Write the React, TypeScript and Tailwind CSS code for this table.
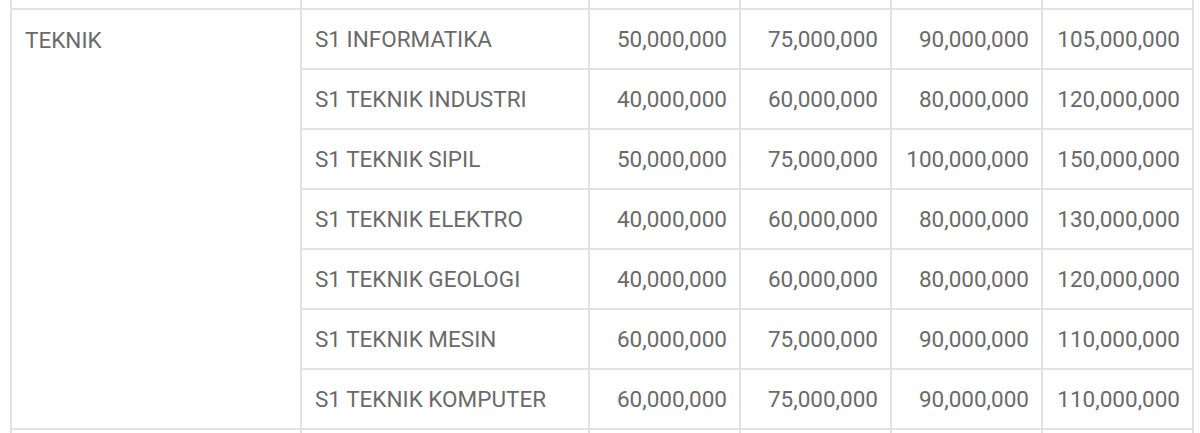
import React from 'react';

type Row = { prodi: string; fees: string[] };

const rows: Row[] = [
  { prodi: 'S1 INFORMATIKA', fees: ['50,000,000', '75,000,000', '90,000,000', '105,000,000'] },
  { prodi: 'S1 TEKNIK INDUSTRI', fees: ['40,000,000', '60,000,000', '80,000,000', '120,000,000'] },
  { prodi: 'S1 TEKNIK SIPIL', fees: ['50,000,000', '75,000,000', '100,000,000', '150,000,000'] },
  { prodi: 'S1 TEKNIK ELEKTRO', fees: ['40,000,000', '60,000,000', '80,000,000', '130,000,000'] },
  { prodi: 'S1 TEKNIK GEOLOGI', fees: ['40,000,000', '60,000,000', '80,000,000', '120,000,000'] },
  { prodi: 'S1 TEKNIK MESIN', fees: ['60,000,000', '75,000,000', '90,000,000', '110,000,000'] },
  { prodi: 'S1 TEKNIK KOMPUTER', fees: ['60,000,000', '75,000,000', '90,000,000', '110,000,000'] },
];

const cell = 'border-2 border-[#e2e2e2] pl-[13px] pr-[12px] pt-[2px] h-[60px] align-middle';

export default function App() {
  return (
    <div className="bg-white h-[433px] overflow-hidden font-['Roboto',sans-serif] text-[22.5px] text-[#6a6a6a]">
      <table className="ml-[10px] w-[1182px] table-fixed border-collapse border-t-0">
        <colgroup>
          <col className="w-[290px]" />
          <col className="w-[288px]" />
          <col className="w-[151px]" />
          <col className="w-[151px]" />
          <col className="w-[151px]" />
          <col className="w-[151px]" />
        </colgroup>
        <tbody>
          {/* sisa baris sebelumnya */}
          <tr>
            {Array.from({ length: 6 }).map((_, i) => (
              <td key={i} className="border-2 border-t-0 border-[#e2e2e2] h-[9px] p-0" />
            ))}
          </tr>
          {rows.map((r, i) => (
            <tr key={r.prodi}>
              {i === 0 && (
                <td rowSpan={rows.length} className="border-2 border-[#e2e2e2] px-[13px] pt-[17px] align-top leading-[26px]">
                  TEKNIK
                </td>
              )}
              <td className={cell}>{r.prodi}</td>
              {r.fees.map((f, j) => (
                <td key={j} className={`${cell} text-right`}>
                  {f}
                </td>
              ))}
            </tr>
          ))}
          <tr>
            {Array.from({ length: 6 }).map((_, i) => (
              <td key={i} className={cell} />
            ))}
          </tr>
        </tbody>
      </table>
    </div>
  );
}
